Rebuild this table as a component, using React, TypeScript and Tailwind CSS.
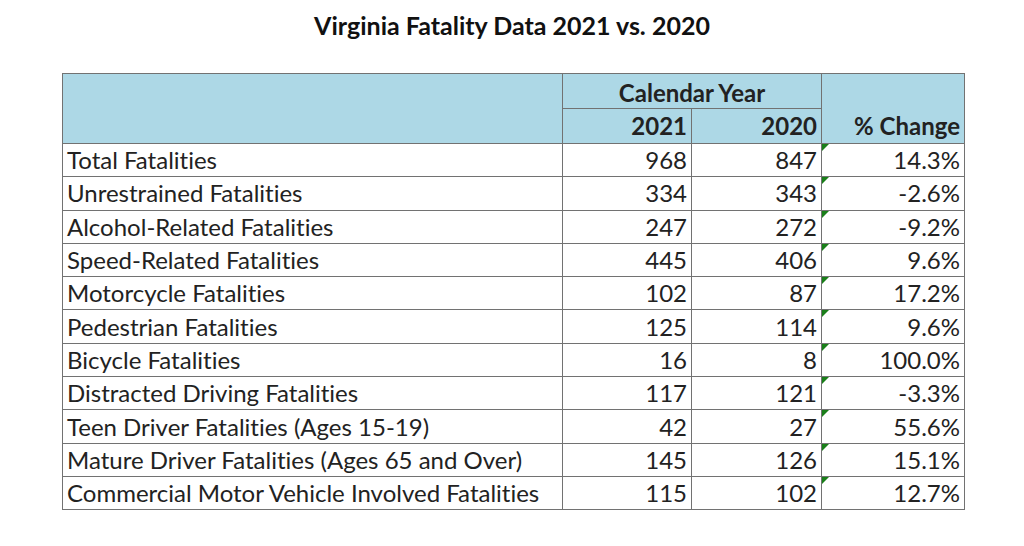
import clsx from 'clsx';

type Row = {
  label: string;
  y2021: string;
  y2020: string;
  change: string;
};

const rows: Row[] = [
  { label: 'Total Fatalities', y2021: '968', y2020: '847', change: '14.3%' },
  { label: 'Unrestrained Fatalities', y2021: '334', y2020: '343', change: '-2.6%' },
  { label: 'Alcohol-Related Fatalities', y2021: '247', y2020: '272', change: '-9.2%' },
  { label: 'Speed-Related Fatalities', y2021: '445', y2020: '406', change: '9.6%' },
  { label: 'Motorcycle Fatalities', y2021: '102', y2020: '87', change: '17.2%' },
  { label: 'Pedestrian Fatalities', y2021: '125', y2020: '114', change: '9.6%' },
  { label: 'Bicycle Fatalities', y2021: '16', y2020: '8', change: '100.0%' },
  { label: 'Distracted Driving Fatalities', y2021: '117', y2020: '121', change: '-3.3%' },
  { label: 'Teen Driver Fatalities (Ages 15-19)', y2021: '42', y2020: '27', change: '55.6%' },
  { label: 'Mature Driver Fatalities (Ages 65 and Over)', y2021: '145', y2020: '126', change: '15.1%' },
  { label: 'Commercial Motor Vehicle Involved Fatalities', y2021: '115', y2020: '102', change: '12.7%' },
];

const cell = 'border border-[#727272] px-[4px] leading-none';

export default function App() {
  return (
    <div className="w-[1024px] h-[546px] bg-white text-[#222] font-['Lato','Liberation_Sans',sans-serif] [font-variant-ligatures:none]">
      <h1 className="pt-[10px] text-center text-[25px] font-bold text-[#111] leading-[30px]">
        Virginia Fatality Data 2021 vs. 2020
      </h1>
      <table className="ml-[62px] mt-[33px] border-collapse table-fixed w-[902px] text-[24px]">
        <colgroup>
          <col className="w-[500px]" />
          <col className="w-[129px]" />
          <col className="w-[130px]" />
          <col className="w-[143px]" />
        </colgroup>
        <thead className="bg-[#add8e6] font-bold">
          <tr className="h-[35px]">
            <th rowSpan={2} className={cell} />
            <th colSpan={2} className={clsx(cell, 'text-center align-bottom pb-[3px]')}>
              Calendar Year
            </th>
            <th rowSpan={2} className={clsx(cell, 'text-right align-bottom pb-[5px]')}>
              % Change
            </th>
          </tr>
          <tr className="h-[35px]">
            <th className={clsx(cell, 'text-right align-bottom pb-[5px]')}>2021</th>
            <th className={clsx(cell, 'text-right align-bottom pb-[5px]')}>2020</th>
          </tr>
        </thead>
        <tbody>
          {rows.map((r) => (
            <tr key={r.label} className="h-[33.3px]">
              <td className={clsx(cell, 'text-left')}>{r.label}</td>
              <td className={clsx(cell, 'text-right')}>{r.y2021}</td>
              <td className={clsx(cell, 'text-right')}>{r.y2020}</td>
              <td className={clsx(cell, 'text-right relative')}>
                {/* excel "number as text" marker */}
                <svg className="absolute left-0 top-0" width="7" height="7" viewBox="0 0 7 7">
                  <polygon points="0,0 7,0 0,7" fill="#1a7f1a" />
                </svg>
                {r.change}
              </td>
            </tr>
          ))}
        </tbody>
      </table>
    </div>
  );
}
